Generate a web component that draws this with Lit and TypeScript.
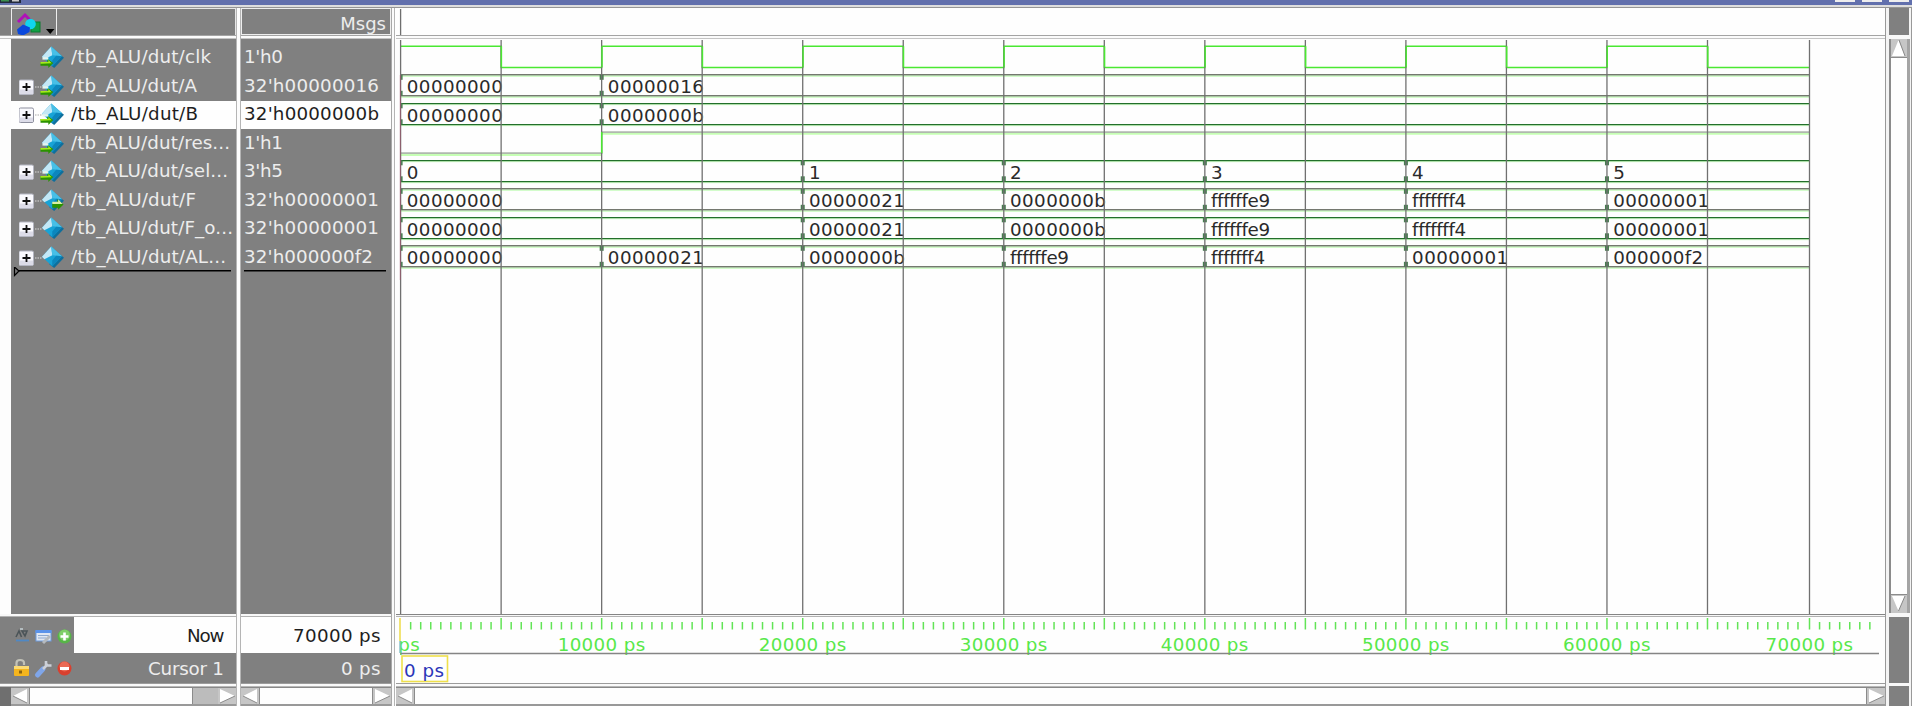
import { LitElement, html, svg, css, nothing } from "lit";
import { customElement } from "lit/decorators.js";
import { classMap } from "lit/directives/class-map.js";

type Dir = "in" | "out" | "none";
interface Signal {
  name: string;
  value: string;
  dir: Dir;
  bus: boolean;
  nameWidth: number;
  levels?: number[];
  // [grid index, text]
  changes?: [number, string][];
}

const Z = "00000000";
const SIGNALS: Signal[] = [
  { name: "/tb_ALU/dut/clk", value: "1'h0", dir: "in", bus: false, nameWidth: 140, levels: [1, 0, 1, 0, 1, 0, 1, 0, 1, 0, 1, 0, 1, 0] },
  { name: "/tb_ALU/dut/A", value: "32'h00000016", dir: "in", bus: true, nameWidth: 126, changes: [[0, Z], [2, "00000016"]] },
  { name: "/tb_ALU/dut/B", value: "32'h0000000b", dir: "in", bus: true, nameWidth: 127, changes: [[0, Z], [2, "0000000b"]] },
  { name: "/tb_ALU/dut/res...", value: "1'h1", dir: "in", bus: false, nameWidth: 159, levels: [0, 0, 1, 1, 1, 1, 1, 1, 1, 1, 1, 1, 1, 1] },
  { name: "/tb_ALU/dut/sel...", value: "3'h5", dir: "in", bus: true, nameWidth: 157, changes: [[0, "0"], [4, "1"], [6, "2"], [8, "3"], [10, "4"], [12, "5"]] },
  { name: "/tb_ALU/dut/F", value: "32'h00000001", dir: "out", bus: true, nameWidth: 125, changes: [[0, Z], [4, "00000021"], [6, "0000000b"], [8, "ffffffe9"], [10, "fffffff4"], [12, "00000001"]] },
  { name: "/tb_ALU/dut/F_o...", value: "32'h00000001", dir: "none", bus: true, nameWidth: 162, changes: [[0, Z], [4, "00000021"], [6, "0000000b"], [8, "ffffffe9"], [10, "fffffff4"], [12, "00000001"]] },
  { name: "/tb_ALU/dut/AL...", value: "32'h000000f2", dir: "none", bus: true, nameWidth: 155, changes: [[0, Z], [2, "00000021"], [4, "0000000b"], [6, "ffffffe9"], [8, "fffffff4"], [10, "00000001"], [12, "000000f2"]] },
];
const SELECTED = 2;

const gridX = (i: number) => (i === 14 ? 1413.5 : 4.6 + i * 100.53);
const ADV: Record<string, number> = { f: 6, e: 11 };
const advance = (s: string) => [...s].reduce((w, c) => w + (ADV[c] ?? 12), 0);

const diamond = (dir: Dir) => svg`
  <path d="M12 3 L24 13 L14 24 L9 20 Z" fill="#0f6f9c"/>
  <path d="M11 1 L22 11.500 L12 22 L1.500 12 Z" fill="#17a3d6"/>
  <path d="M11 1 L12 10.500 L4 14.500 L1.500 12 Z" fill="#c4e8f6"/>
  <path d="M11 1 L22 11.500 L12 10.500 Z" fill="#48bfe6"/>
  <path d="M22 11.500 L12 22 L12 16 L16 11 Z" fill="#0c86bd"/>
  ${dir === "in" ? svg`
    <path d="M0 17.500 H7 V14 L13 18.500 L8 24 V21.500 H0 Z" fill="#2a9300"/>
    <path d="M0 17.500 H8 V15.500 L11.500 18.800 L0 19.500 Z" fill="#a6ea1c"/>
    <path d="M2 12.500 H8 V15 H2 Z" fill="#e4f5ee"/>` : nothing}
  ${dir === "out" ? svg`
    <path d="M12 15.500 H17 V11.500 L23.500 17 L18 22.500 V20.500 H12 Z" fill="#2a9300"/>
    <path d="M12 14 H18 V11.500 L22.500 16.500 H12 Z" fill="#d9efa4"/>` : nothing}`;

@customElement("scroll-strip")
export class ScrollStrip extends LitElement {
  static properties = { trough: { type: Number }, vertical: { type: Boolean } };
  declare trough: number;
  declare vertical: boolean;
  static styles = css`
    :host { display: flex; box-sizing: border-box; background: #c6c6c6; border-top: 1px solid #888; border-bottom: 2px solid #999; }
    :host([vertical]) { flex-direction: column; border: 0; border-left: 2px solid #8b8b8b; border-right: 3px solid #a4a4a4; }
    .arrow { flex: none; display: block; }
    .thumb { flex: 1; background: #fefefe; border: solid #8b8b8b; border-width: 0 1px; }
    :host([vertical]) .thumb { border-width: 1px 0; }
    .trough { flex: none; background: #bcbcbc; }
  `;
  render() {
    const v = this.vertical;
    const box = v ? "0 0 15 18" : "0 0 18 16";
    const size = v ? [15, 18] : [18, 16];
    return html`
      <svg class="arrow" width=${size[0]} height=${size[1]} viewBox=${box}>
        ${v ? svg`<path d="M7.500 1 L14 17 H1 Z" fill="#fff"/><path d="M8 1 L14 17" stroke="#888"/>`
            : svg`<path d="M2 8 L16 1 V15 Z" fill="#fff"/><path d="M2 8 L16 15" fill="none" stroke="#8a8a8a"/>`}
      </svg>
      <div class="thumb"></div>
      ${this.trough ? html`<div class="trough" style="width:${this.trough}px"></div>` : nothing}
      <svg class="arrow" width=${size[0]} height=${size[1]} viewBox=${box}>
        ${v ? svg`<path d="M1 1 H14 L7.500 16 Z" fill="#fff"/><path d="M14 1 L7.500 16" stroke="#888"/>`
            : svg`<path d="M2 1 L17 8 L2 15 Z" fill="#fff"/><path d="M2 15 L17 8" fill="none" stroke="#8a8a8a"/>`}
      </svg>`;
  }
}

@customElement("wave-canvas")
export class WaveCanvas extends LitElement {
  static styles = css`
    :host { display: block; }
    svg { display: block; }
    text { font: 18.3px "DejaVu Sans", sans-serif; fill: #2a2a2a; font-variant-ligatures: none; }
    .grid { stroke: #707070; stroke-width: 1.3; }
    .wave { fill: none; stroke: #4be832; stroke-width: 1.4; }
    .soft { fill: none; stroke: #c6ffb4; stroke-width: 2; }
    .grey { fill: none; stroke: #b0b8ae; stroke-width: 1.6; }
    .busA { fill: #74786f; }
    .busB { fill: #236f2b; }
    .halo { fill: #d3fccb; }
    .knot { fill: #477c50; }
    .start { stroke: #b04a6a; stroke-width: 0.8; opacity: 0.7; }
  `;
  private level(s: Signal, row: number) {
    const top = 7.3 + row * 28.6;
    const y = (v: number) => (v ? top : top + 21.2);
    let d = `M${gridX(0)} ${y(s.levels![0])}`;
    s.levels!.forEach((v, i) => { d += ` V${y(v)} H${gridX(i + 1)}`; });
    if (row === 0) return svg`<path class="wave" d=${d}/>`;
    const mid = gridX(2);
    return svg`
      <path class="soft" d="M${gridX(0)} ${top + 22.8} H${mid} M${mid} ${top + 1.6} H${gridX(14)}"/>
      <path class="grey" d="M${gridX(0)} ${top + 21} H${mid} M${mid} ${top} H${gridX(14)}"/>
      <path class="wave" d="M${mid} ${top + 22} V${top}"/>`;
  }
  private bus(s: Signal, row: number) {
    const top = 35.8 + (row - 1) * 28.5;
    const soft = row === 1 || row === 5 || row === 7;
    const x0 = gridX(0);
    const w = gridX(14) - x0;
    const edge = (y: number) => svg`
      <rect class="halo" x=${x0} y=${Math.floor(y)} width=${w} height=${soft ? 3 : 2.2}></rect>
      <rect class=${soft ? "busA" : "busB"} x=${x0} y=${soft ? y - 0.8 : Math.round(y - 0.4)} width=${w} height=${soft ? 1.4 : 1.2}></rect>`;
    return svg`
      ${edge(top)}${edge(top + 21)}
      ${s.changes!.map(([g, t]) => {
        const x = gridX(g);
        return svg`
          <rect class="knot" x=${g ? x - 2 : x} y=${top} width=${g ? 4 : 2} height="5"></rect>
          <rect class="knot" x=${g ? x - 2 : x} y=${top + 16} width=${g ? 4 : 2} height="5"></rect>
          <text x=${x + 6.2} y=${top + 18.5} textLength=${advance(t)}>${t}</text>`;
      })}`;
  }
  render() {
    return html`<svg width="1489" height="575" viewBox="0 0 1489 575">
      ${SIGNALS.map((s, i) => (s.levels ? this.level(s, i) : this.bus(s, i)))}
      ${Array.from({ length: 15 }, (_, i) => svg`<line class="grid" x1=${gridX(i)} x2=${gridX(i)} y1="1" y2="575"></line>`)}
      ${svg`<path class="wave" d=${[1, 2, 3, 4, 5, 6, 7, 8, 9, 10, 11, 12, 13].map((i) => `M${gridX(i) + 0.3} 7.300 v21`).join(" ")}></path>
      <path d="M${gridX(2)} 93 v21" class="wave"></path>
      <path class="start" d="M4.300 36 V241"></path>`}
    </svg>`;
  }
}

@customElement("time-ruler")
export class TimeRuler extends LitElement {
  static styles = css`
    :host { display: block; }
    svg { display: block; }
    text { font: 18.3px "DejaVu Sans", sans-serif; }
    .tick { stroke: #62e456; stroke-width: 1.5; }
    .label { fill: #58e84a; }
    .cursor { fill: #2c36b8; }
  `;
  render() {
    const ticks = Array.from({ length: 147 }, (_, i) => i).slice(1);
    return html`<svg width="1489" height="66" viewBox="0 0 1489 66">
      ${ticks.map((i) => {
        const x = i >= 140 ? 1413.5 + (i - 140) * 10.06 : 4.6 + i * 10.053;
        return svg`<line class="tick" x1=${x} x2=${x} y1=${i % 10 ? 5 : 1} y2="12.500"></line>`;
      })}
      ${[1, 2, 3, 4, 5, 6, 7].map((k) => svg`<text class="label" x=${gridX(k * 2) - 44} y="33.500" textLength="87.500">${k * 10000} ps</text>`)}
      ${svg`<clipPath id="edge"><rect x="4" y="0" width="60" height="50"></rect></clipPath>
      <text class="label" x="2.300" y="33.500" textLength="21.500" clip-path="url(#edge)">ps</text>
      <path d="M4.500 36.500 H1483" stroke="#858585" stroke-width="1.300"></path>
      <path d="M4 1 V24" stroke="#ecd83a" stroke-width="1.400"></path>
      <path d="M4 24 V36" stroke="#75b9c0" stroke-width="1.300"></path>
      <rect x="6" y="39" width="45.500" height="25.500" fill="none" stroke="#efe04c" stroke-width="1.600"></rect>
      <text class="cursor" x="8" y="60" textLength="40">0 ps</text>`}
    </svg>`;
  }
}

@customElement("app-root")
export class AppRoot extends LitElement {
  static styles = css`
    :host { display: flex; flex-direction: column; width: 1912px; height: 706px; overflow: hidden; background: #f1f1f1; font: 18px/28px "DejaVu Sans", sans-serif; color: #ededed; }
    svg { display: block; flex: none; }
    .line { font: 18.3px "DejaVu Sans", sans-serif; fill: #ededed; }
    .line.dark-text { fill: #1e1e1e; }
    .title { height: 5px; flex: none; background: #6270ad; display: flex; justify-content: space-between; overflow: hidden; }
    .wins { display: flex; gap: 7px; padding-right: 3px; }
    .win { width: 20px; height: 2px; background: #eee; }
    .under { height: 3px; flex: none; background: linear-gradient(#dedede 66%, #969696 66%); }
    .cols { display: flex; flex: 1; min-height: 0; }
    .col { display: flex; flex-direction: column; flex: none; }
    .names { width: 236px; }
    .values { width: 150px; }
    .waves { width: 1489px; }
    .sepA { flex: none; width: 5px; background: linear-gradient(90deg, #b5b5b5 1px, #fcfcfc 1px 4px, #b5b5b5 4px); }
    .sepB { flex: none; width: 5px; background: linear-gradient(90deg, #a8a8a8 1px, #fbfbfb 1px 3px, #b4b4b4 3px 4px, #fff 4px); }
    .side { width: 27px; box-sizing: border-box; padding: 0 1px 0 3px; border-left: 1px solid #999; background: #f4f4f4; border-right: 1px solid #999; }
    .head { height: 27px; flex: none; box-sizing: border-box; background: #808080; display: flex; }
    .names .head { padding-left: 11px; }
    .tool { width: 46px; height: 27px; box-sizing: border-box; border: 1.500px solid #eee; border-bottom: 0; }
    .fill { flex: 1; border: 1px solid #e6e6e6; border-left: 0; border-bottom: 0; }
    .values .head { border: 1px solid #eee; justify-content: flex-end; padding-right: 4px; line-height: 30px; overflow: hidden; }
    .waves .head { background: #fefefe; }
    .rule { height: 4px; flex: none; background: linear-gradient(#a4a4a4 1px, #fbfbfb 1px 3px, #c4c4c4 3px); }
    .body { height: 575px; flex: none; box-sizing: border-box; background: #808080; padding-top: 5px; }
    .names .body { border-left: 11px solid #fdfdfd; }
    .waves .body { background: #fefefe; padding: 0; }
    .row { height: 28.500px; display: flex; align-items: center; box-sizing: border-box; }
    .row.sel { height: 27.500px; margin-bottom: 1px; background: #fefefe; }
    .names .row { padding-left: 8px; }
    .values .row { padding-left: 3px; }
    .insert { margin-top: -5px; }
    .rule2 { height: 3px; flex: none; background: #f8f8f8; border-bottom: 1px solid #b2b2b2; box-sizing: border-box; }
    .waves .rule2 { border-top: 1px solid #858585; }
    .now, .cur { flex: none; display: flex; align-items: center; justify-content: flex-end; }
    .now { height: 36px; background: #fefefe; }
    .cur { height: 30px; background: #808080; }
    .label { padding-top: 3px; }
    .names .label { flex: 1; display: flex; justify-content: flex-end; padding-right: 9px; }
    .values .label { padding-right: 8px; }
    .icons { width: 74px; height: 100%; background: #808080; }
    .ruler { height: 66px; flex: none; background: #fefefe; }
    .rule3 { height: 4px; flex: none; background: linear-gradient(#9c9c9c 1px, #fafafa 1px 3px, #b8b8b8 3px); }
    .scroll { height: 19px; flex: none; display: flex; }
    .scroll scroll-strip { flex: 1; }
    .corner { width: 11px; background: #6f6f6f; flex: none; }
    .dark { background: #808080; margin-right: 1px; flex: none; }
    .d1 { height: 27px; }
    .d2 { height: 66px; }
    .d3 { height: 20px; }
    .gap { height: 4px; flex: none; background: #f8f8f8; }
    .gap.thin { height: 3px; }
    .vs { height: 574px; flex: none; }
  `;

  private icon(s: Signal, selected: boolean) {
    return html`<svg width="52" height="28" viewBox="0 0 52 28">
      ${s.bus ? svg`
        <rect x="0" y="7" width="14.500" height="14.500" rx="1.500" fill="#fafafe" stroke=${selected ? "#8d8f9e" : "#b4b6c2"}></rect>
        <rect x="0.500" y="16.500" width="13.500" height="4.500" fill="#dcdce8"></rect>
        <path d="M3.500 14 H11.500 M7.500 10 V18" stroke="#111" stroke-width="1.800"></path>
        <path d="M16 14 H23" stroke=${selected ? "#aaa" : "#dadada"} stroke-width="1.200" stroke-dasharray="1.500 1"></path>` : nothing}
      ${svg`<g transform="translate(21.500 1.500) scale(0.98 0.94)">${diamond(s.dir)}</g>`}
    </svg>`;
  }

  private text(t: string, w: number, dark: boolean) {
    return html`<svg width=${w + 3} height="28" viewBox="0 0 ${w + 3} 28">
      ${svg`<text class=${dark ? "line dark-text" : "line"} x="0" y="19.200" textLength=${w}>${t}</text>`}
    </svg>`;
  }

  private insertion(w: number, arrow: boolean) {
    return html`<svg class="insert" width=${w} height="10" viewBox="0 0 ${w} 10">
      ${arrow ? svg`<path d="M3.500 0 V8.500 L8 4 Z" fill="#777" stroke="#000" stroke-width="1.200"></path>` : nothing}
      ${svg`<path d="M${arrow ? 8 : 3} 3.700 H${w - 5}" stroke="#000" stroke-width="1.600"></path>`}
    </svg>`;
  }

  render() {
    return html`
      <div class="title">
        <svg width="22" height="5" viewBox="0 0 22 5"><rect width="21" height="3" fill="#222a3c"></rect><rect x="1" width="8" height="1.500" fill="#3b8f4e"></rect><rect x="12" width="7" height="1.500" fill="#c8c8c8"></rect></svg>
        <div class="wins"><div class="win"></div><div class="win"></div><div class="win"></div></div>
      </div>
      <div class="under"></div>
      <div class="cols">
        <div class="col names">
          <div class="head">
            <div class="tool"><svg width="43" height="26" viewBox="0 0 43 26">
              <path d="M6 13 L13 6 L20 13" fill="#808080" stroke="#b012b8" stroke-width="3"></path>
              <rect x="19" y="13" width="9" height="10" fill="#12a045" stroke="#0b7b30"></rect>
              <circle cx="18.500" cy="15" r="5.300" fill="#10d5ee"></circle>
              <path d="M5 20.500 L11 15.500 L18 18.500 L17.500 23 L11 26.500 L6 25 Z" fill="#0a48dc"></path>
              <path d="M34 20 H42.500 L38.200 25 Z" fill="#000"></path>
            </svg></div>
            <div class="fill"></div>
          </div>
          <div class="rule"></div>
          <div class="body">
            ${SIGNALS.map((s, i) => html`<div class=${classMap({ row: true, sel: i === SELECTED })}>${this.icon(s, i === SELECTED)}${this.text(s.name, s.nameWidth, i === SELECTED)}</div>`)}
            ${this.insertion(225, true)}
          </div>
          <div class="rule2"></div>
          <div class="now"><div class="icons">
            <svg width="74" height="36" viewBox="0 0 74 36">
              <path d="M16 20 L19 14 L21.500 20 M22 14 H27 L25 19 Z" fill="none" stroke="#4b5458" stroke-width="1.600"></path>
              <path d="M16 23.500 H29" stroke="#4f88c4" stroke-width="1.800"></path>
              <path d="M20 12 h3" stroke="#c4d0d4" stroke-width="1.500"></path>
              <rect x="36" y="14" width="15" height="10" fill="#e0e7f2" stroke="#6d9ce0"></rect>
              <rect x="35.500" y="13" width="16" height="3" fill="#5b93ea"></rect>
              <path d="M38 18.500 H49 M38 21 H46" stroke="#8ea9cf"></path>
              <path d="M43 26 L50 19" stroke="#b5babf" stroke-width="3"></path>
              <circle cx="64.500" cy="19.500" r="7" fill="#57b548"></circle><circle cx="64.500" cy="18" r="5.500" fill="#7fce68"></circle>
              <path d="M60.500 19.500 H68.500 M64.500 15.500 V23.500" stroke="#fff" stroke-width="2.600"></path>
            </svg></div><div class="label">${this.text("Now", 37.5, true)}</div></div>
          <div class="cur"><div class="icons">
            <svg width="74" height="30" viewBox="0 0 74 30">
              <path d="M16.500 14 V10 Q16.500 7 20 7 Q24 7 24 10 V12" fill="none" stroke="#c2c2b8" stroke-width="2.200"></path>
              <rect x="14" y="13" width="15" height="10" rx="1" fill="#f5b51d"></rect><rect x="14" y="13" width="15" height="3" fill="#fbda73"></rect>
              <path d="M19 19 h3" stroke="#8d6410" stroke-width="3"></path>
              <path d="M37.500 22 L43 16" stroke="#7fa6ea" stroke-width="5" stroke-linecap="round"></path>
              <path d="M43 16 L48 11 M46 8 V12.500 H51.500" fill="none" stroke="#ccd0d8" stroke-width="2.600"></path>
              <circle cx="64.500" cy="15.500" r="7" fill="#d8402f"></circle><circle cx="64.500" cy="13.500" r="5" fill="#ea6a55"></circle>
              <rect x="60" y="14" width="9" height="3" fill="#fff"></rect>
            </svg></div><div class="label">${this.text("Cursor 1", 76, false)}</div></div>
          <div class="rule3"></div>
          <div class="scroll"><div class="corner"></div><scroll-strip .trough=${25}></scroll-strip></div>
        </div>
        <div class="sepA"></div>
        <div class="col values">
          <div class="head">Msgs</div>
          <div class="rule"></div>
          <div class="body">
            ${SIGNALS.map((s, i) => html`<div class=${classMap({ row: true, sel: i === SELECTED })}>${this.text(s.value, s.value.length < 6 ? 39 : s.value.endsWith("f2") ? 129 : 135, i === SELECTED)}</div>`)}
            ${this.insertion(150, false)}
          </div>
          <div class="rule2"></div>
          <div class="now"><div class="label">${this.text("70000 ps", 87.500, true)}</div></div>
          <div class="cur"><div class="label">${this.text("0 ps", 39.500, false)}</div></div>
          <div class="rule3"></div>
          <div class="scroll"><scroll-strip></scroll-strip></div>
        </div>
        <div class="sepB"></div>
        <div class="col waves">
          <div class="head"><svg width="20" height="27" viewBox="0 0 20 27"><path d="M4.600 1 V27" stroke="#6e6e6e" stroke-width="1.300"></path></svg></div>
          <div class="rule"></div>
          <div class="body"><wave-canvas></wave-canvas></div>
          <div class="rule2"></div>
          <div class="ruler"><time-ruler></time-ruler></div>
          <div class="rule3"></div>
          <div class="scroll"><scroll-strip></scroll-strip></div>
        </div>
        <div class="col side">
          <div class="dark d1"></div>
          <div class="gap"></div>
          <scroll-strip class="vs" vertical></scroll-strip>
          <div class="gap"></div>
          <div class="dark d2"></div>
          <div class="gap thin"></div>
          <div class="dark d3"></div>
        </div>
      </div>`;
  }
}
